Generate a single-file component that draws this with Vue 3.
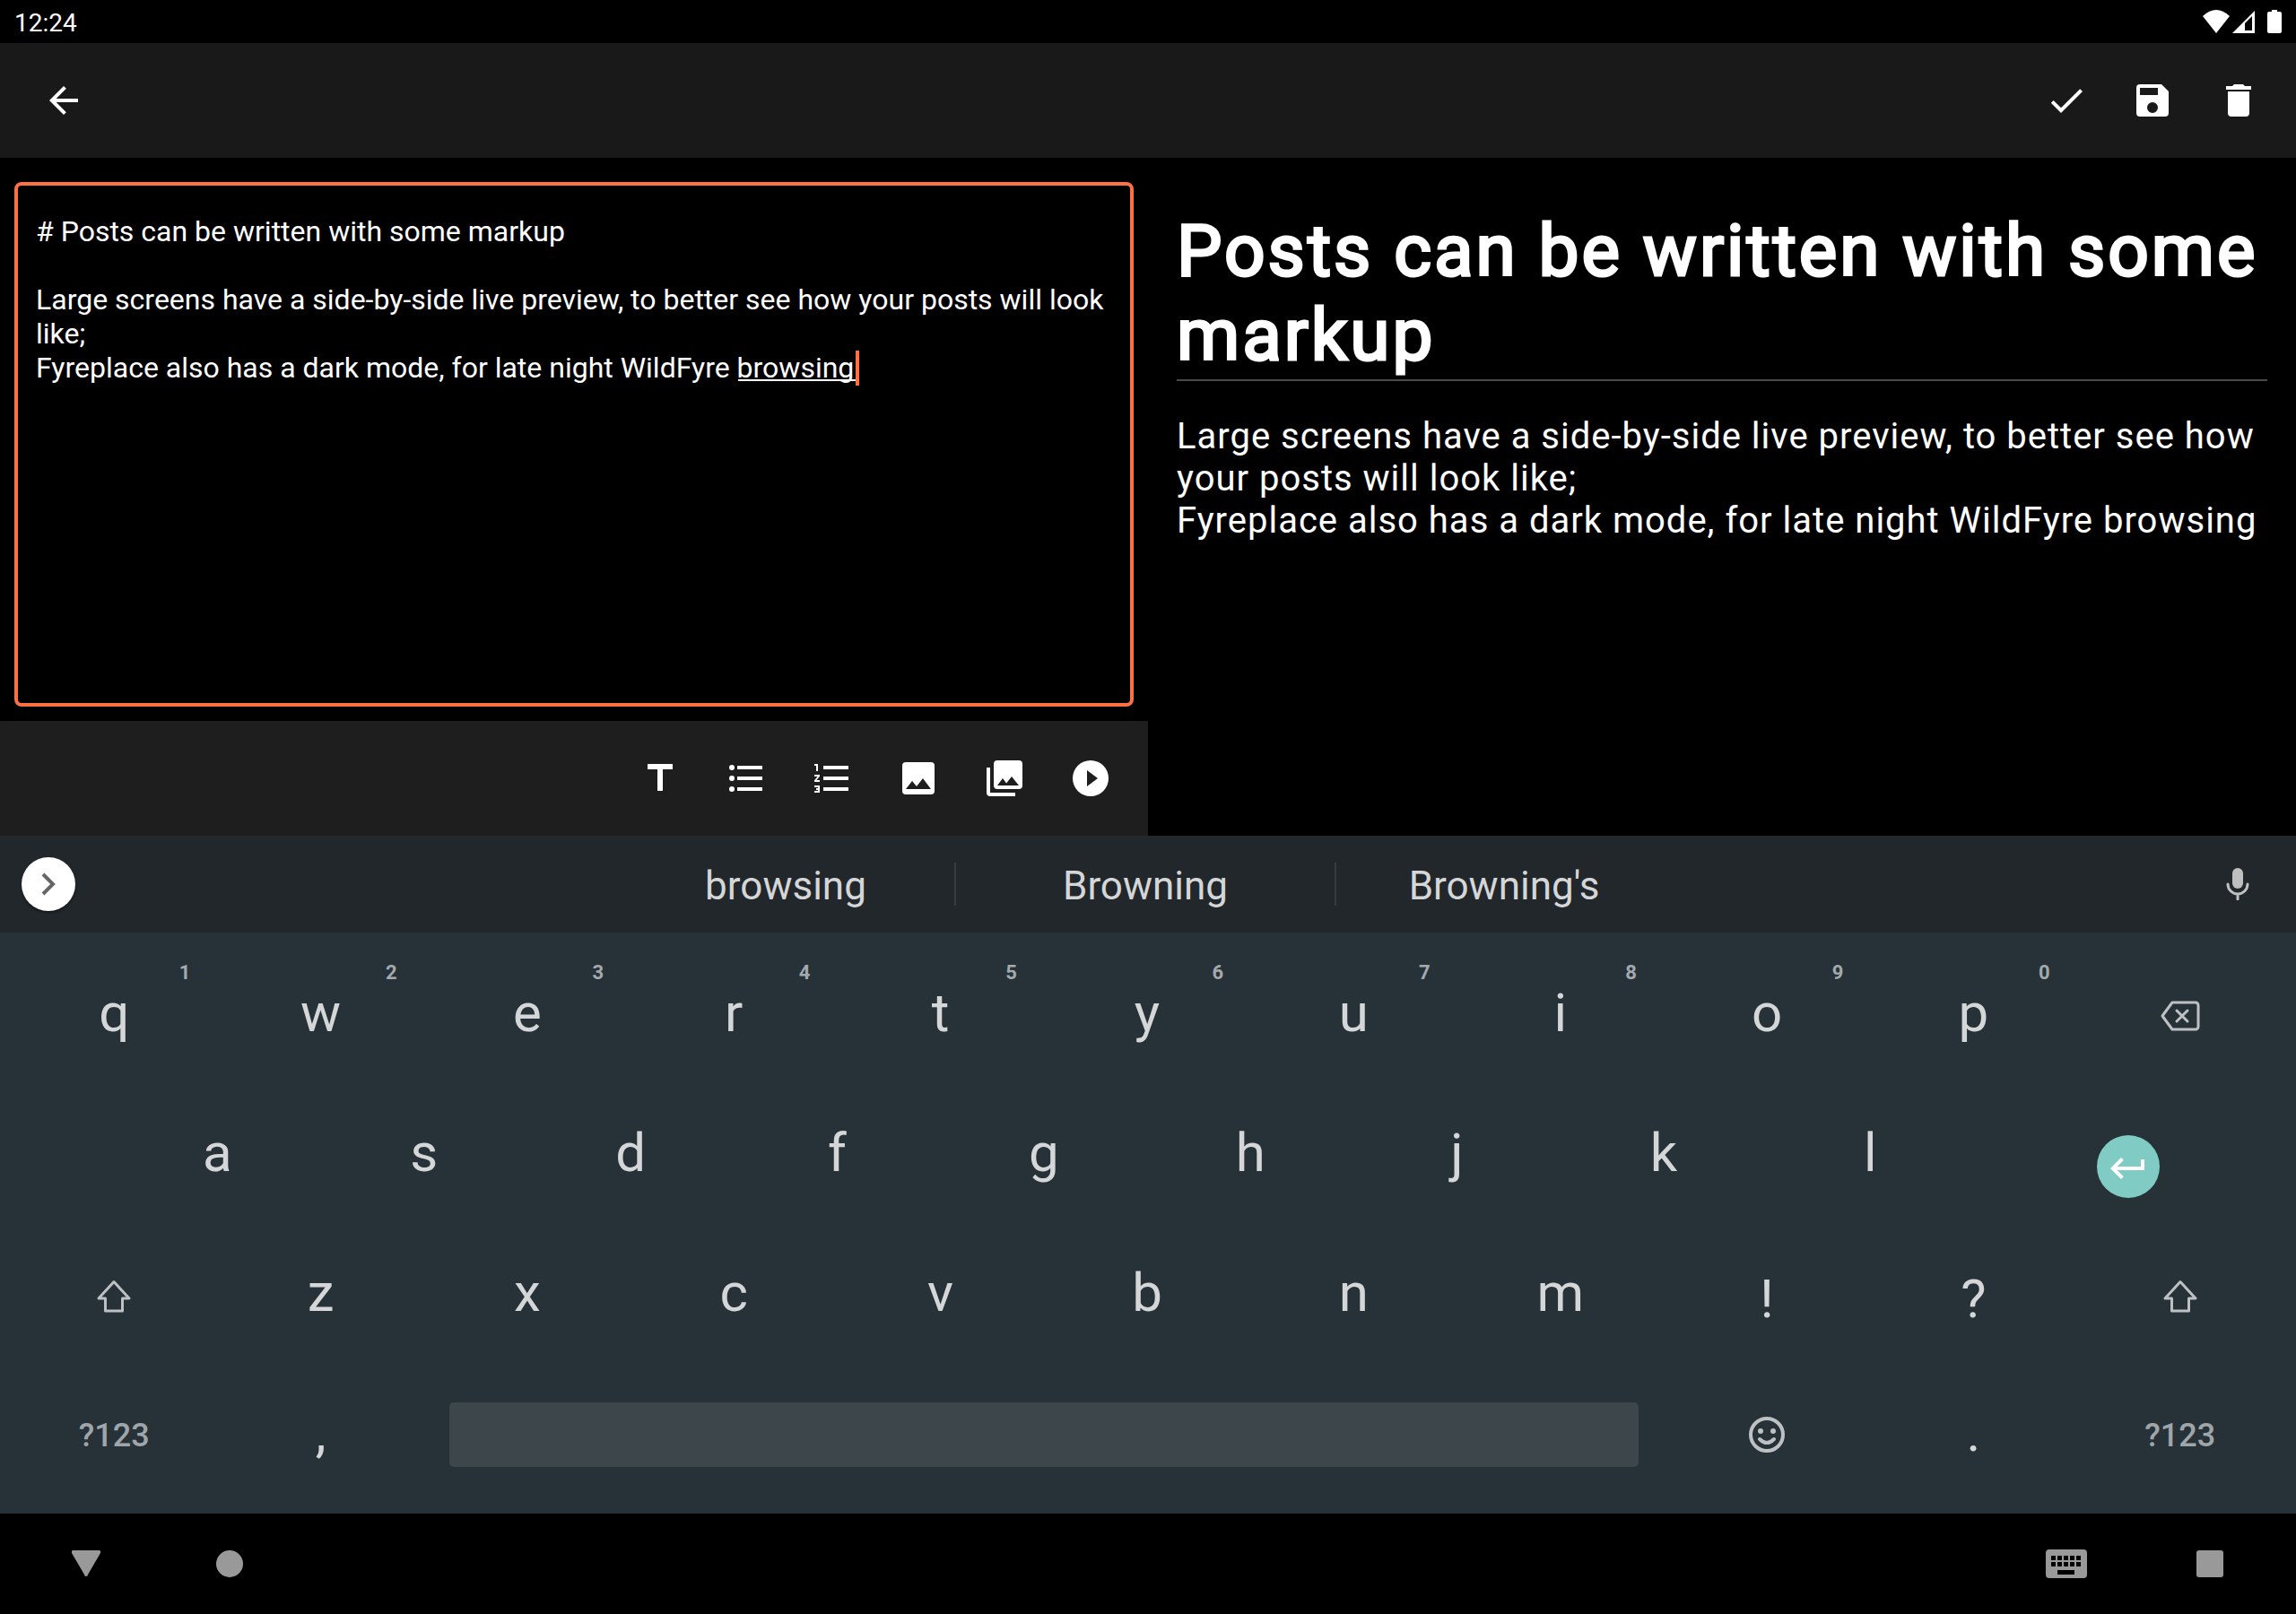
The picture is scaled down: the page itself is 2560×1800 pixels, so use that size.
<script setup>
import { ref } from 'vue'

const draft = ref(
  '# Posts can be written with some markup\n\nLarge screens have a side-by-side live preview, to better see how your posts will look like;\nFyreplace also has a dark mode, for late night WildFyre browsing'
)

const postActions = [
  { label: 'Publish', path: 'M9 16.17L4.83 12l-1.42 1.41L9 19 21 7l-1.41-1.41z' },
  { label: 'Save draft', path: 'M17 3H5a2 2 0 0 0-2 2v14a2 2 0 0 0 2 2h14a2 2 0 0 0 2-2V7l-4-4zm-5 16a3 3 0 1 1 0-6 3 3 0 0 1 0 6zm3-10H5V5h10v4z' },
  { label: 'Delete', path: 'M6 19a2 2 0 0 0 2 2h8a2 2 0 0 0 2-2V7H6v12zM19 4h-3.500l-1-1h-5l-1 1H5v2h14V4z' }
]

const formatActions = [
  { label: 'Title', path: 'M5 4v3h5.500v12h3V7H19V4z' },
  { label: 'Bulleted list', path: 'M4 10.500a1.500 1.500 0 1 0 0 3 1.500 1.500 0 0 0 0-3zm0-6a1.500 1.500 0 1 0 0 3 1.500 1.500 0 0 0 0-3zm0 12a1.500 1.500 0 1 0 0 3 1.500 1.500 0 0 0 0-3zM7 19h14v-2H7v2zm0-6h14v-2H7v2zm0-8v2h14V5H7z' },
  { label: 'Numbered list', path: 'M2 17h2v.5H3v1h1v.5H2v1h3v-4H2v1zm1-9h1V4H2v1h1v3zm-1 3h1.800L2 13.100v.9h3v-1H3.200L5 10.900V10H2v1zm5-6v2h14V5H7zm0 14h14v-2H7v2zm0-6h14v-2H7v2z' },
  { label: 'Image', path: 'M21 19V5a2 2 0 0 0-2-2H5a2 2 0 0 0-2 2v14a2 2 0 0 0 2 2h14a2 2 0 0 0 2-2zM8.500 13.500l2.500 3.010L14.500 12l4.500 6H5l3.500-4.500z' },
  { label: 'Image gallery', path: 'M22 16V4a2 2 0 0 0-2-2H8a2 2 0 0 0-2 2v12a2 2 0 0 0 2 2h12a2 2 0 0 0 2-2zM11 12l2.030 2.710L16 11l4 5H8l3-4zM2 6v14a2 2 0 0 0 2 2h14v-2H4V6H2z' },
  { label: 'Video', path: 'M12 2a10 10 0 1 0 0 20 10 10 0 0 0 0-20zm-2 14.500v-9l6 4.500-6 4.500z' }
]

const suggestions = ['browsing', 'Browning', "Browning's"]
const topRow = [...'qwertyuiop'].map((letter, i) => ({ letter, hint: (i + 1) % 10 }))
const homeRow = [...'asdfghjkl']
const lowerRow = [...'zxcvbnm']
</script>

<template>
  <div class="screen">
    <header class="status">
      <span>12:24</span>
      <div class="indicators">
        <svg class="wifi" width="30" height="26" viewBox="0 0 30 26"><path d="M15 26L0 7Q15-7 30 7z" /></svg>
        <svg class="signal" width="25" height="26" viewBox="0 0 25 26"><path fill-rule="evenodd" d="M0 26L25 1v25zM14 15v8h8V7z" /></svg>
        <svg width="16" height="26" viewBox="0 0 16 26"><path d="M5 0h6v2h3a2 2 0 0 1 2 2v20a2 2 0 0 1-2 2H2a2 2 0 0 1-2-2V4a2 2 0 0 1 2-2h3z" /></svg>
      </div>
    </header>

    <nav class="appbar">
      <button class="tool back" aria-label="Back">
        <svg class="icon" viewBox="0 0 24 24"><path d="M20 11H7.830l5.590-5.590L12 4l-8 8 8 8 1.410-1.410L7.830 13H20z" /></svg>
      </button>
      <button v-for="a in postActions" :key="a.label" class="tool" :aria-label="a.label">
        <svg class="icon" viewBox="0 0 24 24"><path :d="a.path" /></svg>
      </button>
    </nav>

    <main class="workspace">
      <section class="compose">
        <div class="field">
          <textarea v-model="draft" aria-label="Post content" spellcheck="false"></textarea>
          <span class="composing"></span>
        </div>
        <div class="formatbar">
          <button v-for="a in formatActions" :key="a.label" class="tool" :aria-label="a.label">
            <svg class="icon" viewBox="0 0 24 24"><path :d="a.path" /></svg>
          </button>
        </div>
      </section>
      <article class="preview">
        <h1>Posts can be written with some markup</h1>
        <p>Large screens have a side-by-side live preview, to better see how your posts will look like;<br />Fyreplace also has a dark mode, for late night WildFyre browsing</p>
      </article>
    </main>

    <section class="keyboard" aria-label="Keyboard">
      <div class="suggestbar">
        <button class="expand" aria-label="More">
          <svg width="16" height="26" viewBox="0 0 16 26"><path d="M2 2l11 11L2 24" /></svg>
        </button>
        <button v-for="s in suggestions" :key="s" class="suggestion">{{ s }}</button>
        <button class="mic" aria-label="Voice input">
          <svg width="26" height="36" viewBox="0 0 26 36">
            <rect x="7" y="0" width="12" height="23" rx="6" />
            <path d="M2 18a11 11 0 0 0 22 0M13 29v6" />
          </svg>
        </button>
      </div>

      <div class="keys">
        <div class="row">
          <button v-for="k in topRow" :key="k.letter" class="key">{{ k.letter }}<small>{{ k.hint }}</small></button>
          <button class="key glyph" aria-label="Backspace">
            <svg width="44" height="34" viewBox="0 0 44 34"><path d="M13 2h26a3 3 0 0 1 3 3v24a3 3 0 0 1-3 3H13L2 17zM18 11l12 12M30 11L18 23" /></svg>
          </button>
        </div>
        <div class="row home">
          <button v-for="k in homeRow" :key="k" class="key">{{ k }}</button>
          <button class="key enter" aria-label="Enter">
            <span class="disc"><svg class="icon" viewBox="0 0 24 24"><path d="M19 7v4H5.830l3.580-3.590L8 6l-6 6 6 6 1.410-1.410L5.830 13H21V7z" /></svg></span>
          </button>
        </div>
        <div class="row">
          <button class="key glyph" aria-label="Shift">
            <svg width="38" height="37" viewBox="0 0 38 37"><path d="M19 2.500L36 21h-7.500v14h-19V21H2z" /></svg>
          </button>
          <button v-for="k in lowerRow" :key="k" class="key">{{ k }}</button>
          <button class="key mark">!</button>
          <button class="key mark">?</button>
          <button class="key glyph" aria-label="Shift">
            <svg width="38" height="37" viewBox="0 0 38 37"><path d="M19 2.500L36 21h-7.500v14h-19V21H2z" /></svg>
          </button>
        </div>
        <div class="row">
          <button class="key mode">?123</button>
          <button class="key">,</button>
          <button class="key space" aria-label="Space"></button>
          <button class="key glyph emoji" aria-label="Emoji">
            <svg width="40" height="40" viewBox="0 0 40 40">
              <circle cx="20" cy="20" r="18" />
              <path d="M12 25q8 8 16 0" />
              <circle class="eye" cx="13" cy="16" r="3" />
              <circle class="eye" cx="27" cy="16" r="3" />
            </svg>
          </button>
          <button class="key">.</button>
          <button class="key mode">?123</button>
        </div>
      </div>
    </section>

    <nav class="system">
      <button aria-label="Hide keyboard">
        <svg width="32" height="30" viewBox="0 0 32 30"><path d="M2 0h28a2 2 0 0 1 2 3L18 27a2 2 0 0 1-4 0L0 3a2 2 0 0 1 2-3z" /></svg>
      </button>
      <button aria-label="Home">
        <svg width="30" height="30" viewBox="0 0 30 30"><circle cx="15" cy="15" r="15" /></svg>
      </button>
      <button class="switcher" aria-label="Switch keyboard">
        <svg width="46" height="32" viewBox="0 0 46 32">
          <path fill-rule="evenodd" d="M4 0h38a4 4 0 0 1 4 4v24a4 4 0 0 1-4 4H4a4 4 0 0 1-4-4V4a4 4 0 0 1 4-4zM6 7v5h5V7zm7 0v5h5V7zm7 0v5h5V7zm7 0v5h5V7zm7 0v5h5V7zM6 14v5h5v-5zm7 0v5h5v-5zm7 0v5h5v-5zm7 0v5h5v-5zm7 0v5h5v-5zM13 23v5h19v-5z" />
        </svg>
      </button>
      <button aria-label="Recent apps">
        <svg width="30" height="30" viewBox="0 0 30 30"><rect width="30" height="30" rx="3" /></svg>
      </button>
    </nav>
  </div>
</template>

<style>
body {
  margin: 0;
  background: #000;
}
</style>

<style scoped>
.screen {
  display: flex;
  flex-direction: column;
  min-height: 100vh;
  background: #000;
  color: #fff;
  font-family: Roboto, "Liberation Sans", sans-serif;
}

.screen * {
  box-sizing: border-box;
}

button {
  display: flex;
  align-items: center;
  justify-content: center;
  margin: 0;
  padding: 0;
  border: 0;
  background: none;
  color: inherit;
  font: inherit;
}

svg {
  display: block;
  fill: currentColor;
}

.icon {
  width: 48px;
  height: 48px;
}

.status {
  display: flex;
  align-items: center;
  justify-content: space-between;
  height: 48px;
  padding: 0 16px;
  font-size: 28px;
}

.status span {
  padding-top: 2px;
}

.indicators {
  display: flex;
}

.wifi {
  margin-right: 3px;
}

.signal {
  margin-right: 14px;
}

.appbar,
.formatbar {
  display: flex;
  align-items: center;
  justify-content: flex-end;
  height: 128px;
  padding: 0 16px;
  background: #191919;
}

.formatbar {
  background: #1e1e1e;
}

.tool {
  width: 96px;
  height: 96px;
}

.back {
  margin: 0 auto 0 7px;
}

.workspace {
  display: grid;
  grid-template-columns: 1fr 1fr;
  flex: 1;
}

.compose {
  display: flex;
  flex-direction: column;
}

.field {
  position: relative;
  display: flex;
  flex: 1;
  margin: 27px 16px 16px;
}

textarea {
  flex: 1;
  padding: 32px 20px;
  border: 4px solid #ff7043;
  border-radius: 8px;
  outline: 0;
  background: #000;
  caret-color: #ff7043;
  color: #fff;
  font: 32px/38px Roboto, "Liberation Sans", sans-serif;
  resize: none;
}

.composing {
  position: absolute;
  top: 188px;
  left: 807px;
  width: 135px;
  height: 39px;
  border-right: 4px solid #ff7043;
  background: linear-gradient(#fff, #fff) 0 32px / 100% 2px no-repeat;
}

.preview {
  padding: 57px 32px 32px;
}

h1 {
  margin: 0 0 38px;
  padding-bottom: 2px;
  border-bottom: 2px solid #4a4a4a;
  font-size: 80px;
  font-weight: 400;
  line-height: 94px;
  letter-spacing: 3px;
  -webkit-text-stroke: 3px #fff;
}

p {
  margin: 0;
  font-size: 40px;
  line-height: 47px;
  letter-spacing: 1px;
}

.keyboard {
  background: #263238;
  color: #d4d6d7;
}

.suggestbar {
  display: grid;
  grid-template-columns: 1fr 376px 424px 376px 1fr;
  align-items: center;
  height: 108px;
  padding: 0 32px 0 24px;
  background: #22272b;
}

.expand {
  width: 60px;
  height: 60px;
  border-radius: 50%;
  background: #fff;
  box-shadow: 0 2px 3px #0006;
}

.expand path {
  fill: none;
  stroke: #666;
  stroke-width: 4;
}

.suggestion {
  height: 48px;
  padding-top: 4px;
  font-size: 44px;
  line-height: 44px;
}

.suggestion + .suggestion {
  border-left: 2px solid #373c40;
}

.mic {
  justify-self: end;
  width: 66px;
  height: 66px;
  color: #bdbfc0;
}

.mic path {
  fill: none;
  stroke: currentColor;
  stroke-width: 3;
  stroke-linecap: round;
}

.keys {
  padding: 12px 14px 12px 12px;
}

.row {
  display: grid;
  grid-template-columns: repeat(22, 1fr);
}

.key {
  position: relative;
  grid-column: span 2;
  height: 156px;
  padding-bottom: 2px;
  font-size: 60px;
}

.home .key:first-child {
  grid-column: 2 / span 2;
}

.key small {
  position: absolute;
  top: 20px;
  right: 30px;
  color: #a3a9ac;
  font-size: 22px;
  font-weight: 700;
  line-height: 26px;
}

.glyph {
  padding-top: 8px;
  color: #bec1c3;
}

.glyph svg {
  fill: none;
  stroke: currentColor;
  stroke-width: 3;
  stroke-linecap: round;
  stroke-linejoin: round;
}

.emoji {
  padding-top: 6px;
}

.emoji svg {
  stroke-width: 4;
}

.eye {
  fill: currentColor;
  stroke: none;
}

.mark {
  padding-top: 14px;
}

.mode {
  padding-top: 8px;
  color: #9fa5a8;
  font-size: 36px;
  font-weight: 500;
}

.home .enter {
  grid-column: span 3;
  padding-top: 32px;
}

.disc {
  display: flex;
  align-items: center;
  justify-content: center;
  width: 70px;
  height: 70px;
  padding-top: 4px;
  border-radius: 50%;
  background: #80cbc4;
  color: #fff;
}

.space {
  grid-column: span 12;
  align-self: center;
  height: 72px;
  margin: 4px 28px 0;
  border-radius: 5px;
  background: #3c464b;
}

.system {
  display: flex;
  height: 112px;
  padding: 0 16px;
  color: #999;
}

.system button {
  width: 160px;
}

.switcher {
  margin-left: auto;
}
</style>
